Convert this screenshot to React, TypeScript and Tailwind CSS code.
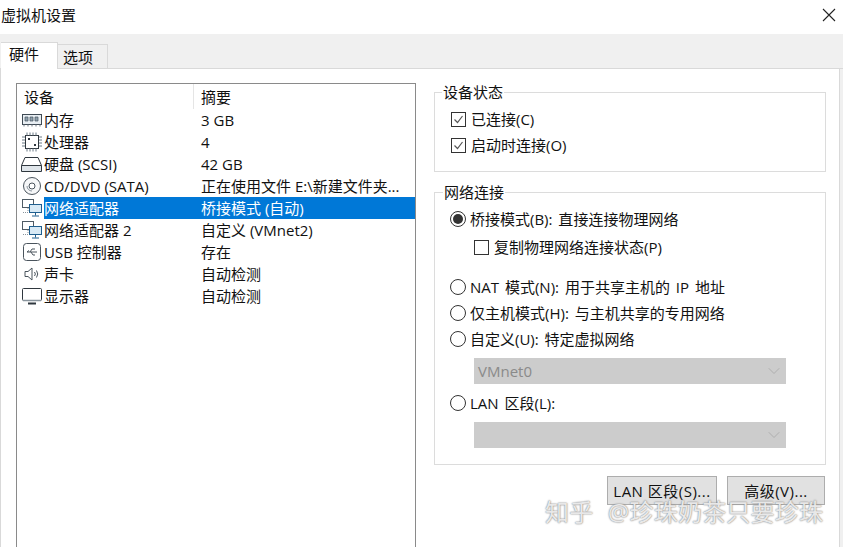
import type { ReactNode } from 'react'
import { ChevronDown } from 'lucide-react'

const font = "font-['Open_Sans','Noto_Sans_CJK_SC',sans-serif]"

function RamIcon() {
  return (
    <svg width="22" height="16" viewBox="0 0 22 16" fill="none">
      <rect x="1.500" y="2.500" width="19" height="10" fill="#e8eef3" stroke="#3f4a54" />
      <path d="M4 5h3v4H4zM9 5h3v4H9zM14 5h3v4h-3z" fill="#8fa0ad" stroke="#46535e" strokeWidth="0.7" />
      <path d="M3 12.500v2M7 12.500v2M11 12.500v2M15 12.500v2M19 12.500v2" stroke="#6c7781" />
    </svg>
  )
}

function CpuIcon() {
  return (
    <svg width="22" height="20" viewBox="0 0 22 20" fill="none">
      <rect x="4.500" y="3.500" width="13" height="13" fill="#fff" stroke="#2f373e" />
      <path d="M1 5h3M1 8h3M1 11h3M1 14h3M18 5h3M18 8h3M18 11h3M18 14h3M6 0.500v3M9 0.500v3M12 0.500v3M15 0.500v3M6 16.500v3M9 16.500v3M12 16.500v3M15 16.500v3" stroke="#6b7a86" />
      <rect x="7" y="6" width="2" height="2" fill="#2f373e" />
      <rect x="13" y="12" width="2" height="2" fill="#2f373e" />
    </svg>
  )
}

function DiskIcon() {
  return (
    <svg width="23" height="17" viewBox="0 0 23 17" fill="none">
      <path d="M5 1.500h13L21.500 9.500v6h-20v-6z" fill="#fff" stroke="#2f373e" />
      <path d="M1.500 9.500h20" stroke="#2f373e" />
      <rect x="2" y="10" width="19" height="5" fill="#dfe5ea" />
    </svg>
  )
}

function DiscIcon() {
  return (
    <svg width="20" height="20" viewBox="0 0 20 20" fill="none">
      <circle cx="10" cy="10" r="8.500" fill="#f6f7f8" stroke="#4a545d" />
      <circle cx="10" cy="10" r="3" fill="#fff" stroke="#4a545d" />
      <path d="M5 10a5 5 0 0 0 5 5" stroke="#8a959e" />
    </svg>
  )
}

function NetIcon() {
  return (
    <svg width="22" height="20" viewBox="0 0 22 20" fill="none">
      <rect x="1.500" y="1.500" width="11" height="8" fill="#fff" stroke="#4f5b65" />
      <path d="M7 10v3M2 14.500h9" stroke="#8a959e" strokeDasharray="1 1" />
      <rect x="8.500" y="6.500" width="12" height="8" fill="#d8eaf6" stroke="#1f5f8f" />
      <path d="M14.500 14.500v3M11 18h7" stroke="#1f5f8f" />
    </svg>
  )
}

function UsbIcon() {
  return (
    <svg width="20" height="20" viewBox="0 0 20 20" fill="none">
      <rect x="1.500" y="1.500" width="17" height="17" rx="3" fill="#fff" stroke="#4a545d" />
      <path d="M5 10h10M5 10l2-1.500M8 10l2-3h3M9 10l2 3h2" stroke="#4a545d" />
    </svg>
  )
}

function SoundIcon() {
  return (
    <svg width="20" height="18" viewBox="0 0 20 18" fill="none">
      <path d="M3 6.500h3L10 3v12l-4-3.500H3z" fill="#fff" stroke="#4a545d" />
      <path d="M12.500 7a3 3 0 0 1 0 4M14.500 5.500a6 6 0 0 1 0 7" stroke="#4a545d" />
    </svg>
  )
}

function MonitorIcon() {
  return (
    <svg width="22" height="18" viewBox="0 0 22 18" fill="none">
      <rect x="1.500" y="1.500" width="19" height="12" rx="1" fill="#fff" stroke="#2f373e" />
      <path d="M7 16.500h8" stroke="#2f373e" strokeWidth="2" />
      <path d="M2 13.500h18" stroke="#8a959e" strokeWidth="1.500" />
    </svg>
  )
}

const devices: { icon: ReactNode; name: string; summary: string; selected?: boolean }[] = [
  { icon: <RamIcon />, name: '内存', summary: '3 GB' },
  { icon: <CpuIcon />, name: '处理器', summary: '4' },
  { icon: <DiskIcon />, name: '硬盘 (SCSI)', summary: '42 GB' },
  { icon: <DiscIcon />, name: 'CD/DVD (SATA)', summary: '正在使用文件 E:\\新建文件夹...' },
  { icon: <NetIcon />, name: '网络适配器', summary: '桥接模式 (自动)', selected: true },
  { icon: <NetIcon />, name: '网络适配器 2', summary: '自定义 (VMnet2)' },
  { icon: <UsbIcon />, name: 'USB 控制器', summary: '存在' },
  { icon: <SoundIcon />, name: '声卡', summary: '自动检测' },
  { icon: <MonitorIcon />, name: '显示器', summary: '自动检测' },
]

function Check({ label, checked, className }: { label: string; checked?: boolean; className?: string }) {
  return (
    <div className={`flex items-center h-[26px] ${className ?? ''}`}>
      <span className="w-[15px] h-[15px] border border-[#333] bg-white flex items-center justify-center shrink-0">
        {checked && (
          <svg width="11" height="11" viewBox="0 0 11 11" fill="none">
            <path d="M1.500 5.500l3 3 5-6.500" stroke="#555" strokeWidth="1.200" />
          </svg>
        )}
      </span>
      <span className="ml-[5px] whitespace-nowrap">{label}</span>
    </div>
  )
}

function Radio({ label, checked }: { label: string; checked?: boolean }) {
  return (
    <div className="flex items-center h-[26px]">
      <span className="w-[16px] h-[16px] rounded-full border border-[#333] bg-white flex items-center justify-center shrink-0">
        {checked && <span className="w-[10px] h-[10px] rounded-full bg-[#333]" />}
      </span>
      <span className="ml-[4px] whitespace-nowrap">{label}</span>
    </div>
  )
}

function DisabledSelect({ value }: { value?: string }) {
  return (
    <div className="ml-[24px] w-[312px] h-[26px] bg-[#cccccc] flex items-center justify-between pl-[4px] pr-[2px] text-[#8a8a8a]">
      <span>{value}</span>
      <ChevronDown size={20} strokeWidth={0.9} className="text-[#a5a5a5]" />
    </div>
  )
}

export default function App() {
  return (
    <div className={`relative w-[843px] h-[547px] overflow-hidden bg-white text-[15px] leading-[22px] text-[#111] ${font}`}>
      {/* title bar */}
      <div className="h-[34px] flex items-center justify-between pl-[1px] pr-[7px]">
        <span className="text-[15px] mt-[-5px]">虚拟机设置</span>
        <svg width="14" height="14" viewBox="0 0 14 14" fill="none" className="mt-[-4px]">
          <path d="M1 1l12 12M13 1L1 13" stroke="#222" strokeWidth="1.100" />
        </svg>
      </div>

      {/* tab strip */}
      <div className="h-[35px] bg-[#f0f0f0] flex items-end pl-[1px] border-b border-[#d9d9d9]">
        <div className="relative z-10 w-[57px] h-[27px] mb-[-1px] bg-white border-t border-r border-[#d9d9d9] pl-[8px]">硬件</div>
        <div className="w-[50px] h-[24px] bg-[#f0f0f0] border-t border-r border-[#d9d9d9] pl-[5px] pt-[1px]">选项</div>
      </div>

      {/* page */}
      <div className="flex h-[478px] bg-[#f0f0f0]">
        <div className="flex h-full w-[840px] border-r border-l border-[#d9d9d9] bg-white pl-[15px] pt-[14px]">
          <div className="w-[400px] h-[480px] border border-[#8a8a8a] border-b-0 shrink-0">
            <div className="flex h-[25px] items-center">
              <span className="w-[177px] pl-[7px] border-r border-[#e5e5e5] h-full flex items-center">设备</span>
              <span className="pl-[7px]">摘要</span>
            </div>
            {devices.map((d) => (
              <div key={d.name} className="flex h-[22px] items-center">
                <div className="w-[27px] pl-[2px] h-full flex items-center justify-center shrink-0">{d.icon}</div>
                <div className={`flex flex-1 h-full items-center ${d.selected ? 'bg-[#0078d7] text-white' : ''}`}>
                  <span className="w-[157px] whitespace-nowrap">{d.name}</span>
                  <span className="whitespace-nowrap">{d.summary}</span>
                </div>
              </div>
            ))}
          </div>

          <div className="ml-[18px] w-[392px] flex flex-col [word-spacing:2px]">
            <fieldset className="h-[88px] border border-[#dcdcdc] mt-[1px] pl-[16px] pt-[6px]">
              <legend className="ml-[-9px] px-[1px] leading-[16px]">设备状态</legend>
              <Check checked label="已连接(C)" />
              <Check checked label="启动时连接(O)" />
            </fieldset>

            <fieldset className="h-[281px] mt-[12px] border border-[#dcdcdc] pl-[15px] pt-[6px]">
              <legend className="ml-[-7px] px-[1px] leading-[16px]">网络连接</legend>
              <Radio checked label="桥接模式(B): 直接连接物理网络" />
              <Check label="复制物理网络连接状态(P)" className="ml-[24px] mt-[2px]" />
              <div className="h-[14px]" />
              <Radio label="NAT 模式(N): 用于共享主机的 IP 地址" />
              <Radio label="仅主机模式(H): 与主机共享的专用网络" />
              <Radio label="自定义(U): 特定虚拟网络" />
              <div className="mt-[6px]">
                <DisabledSelect value="VMnet0" />
              </div>
              <div className="mt-[6px]">
                <Radio label="LAN 区段(L):" />
              </div>
              <div className="mt-[6px]">
                <DisabledSelect />
              </div>
            </fieldset>

            <div className="flex justify-end gap-[10px] mt-[11px] pr-[1px]">
              <button className="w-[110px] h-[29px] bg-[#e1e1e1] border border-[#adadad] text-center tracking-[0.5px]">LAN 区段(S)...</button>
              <button className="w-[98px] h-[29px] bg-[#e1e1e1] border border-[#adadad] text-center tracking-[0.5px]">高级(V)...</button>
            </div>
          </div>
        </div>
      </div>

      {/* watermark */}
      <div className="absolute left-[545px] top-[496px] text-[24px] leading-[32px] whitespace-nowrap tracking-[0.2px] text-white/80 [word-spacing:8px] [text-shadow:0_0_2px_#8a8a8a,0_0_1px_#8a8a8a]">
        知乎 @珍珠奶茶只要珍珠
      </div>
    </div>
  )
}
